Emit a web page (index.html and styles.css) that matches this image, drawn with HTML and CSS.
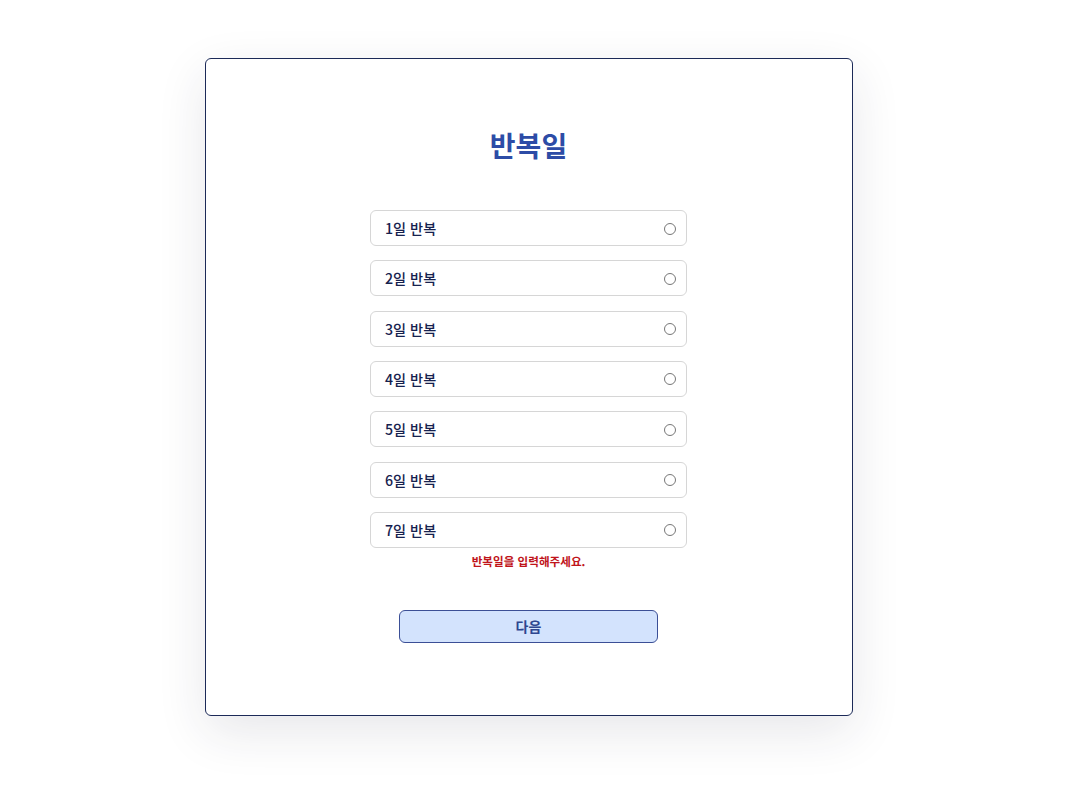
FILE: index.html
```html
<!DOCTYPE html>
<html lang="ko">
<head>
<meta charset="utf-8">
<link rel="stylesheet" href="styles.css">
</head>
<body>
<div class="page">
  <div class="card">
    <h1 class="title">반복일</h1>
    <ul class="options">
      <li class="option"><span>1일 반복</span><span class="radio"></span></li>
      <li class="option"><span>2일 반복</span><span class="radio"></span></li>
      <li class="option"><span>3일 반복</span><span class="radio"></span></li>
      <li class="option"><span>4일 반복</span><span class="radio"></span></li>
      <li class="option"><span>5일 반복</span><span class="radio"></span></li>
      <li class="option"><span>6일 반복</span><span class="radio"></span></li>
      <li class="option"><span>7일 반복</span><span class="radio"></span></li>
    </ul>
    <p class="error">반복일을 입력해주세요.</p>
    <button class="next">다음</button>
  </div>
</div>
</body>
</html>
```
FILE: styles.css
```css
* { box-sizing: border-box; }
html, body { margin: 0; padding: 0; background: #fff; }
body { font-family: "Noto Sans CJK KR", "Noto Sans", sans-serif; }
.page {
  padding: 58px 0 70px 205px;
}
.card {
  width: 648px;
  height: 658px;
  border: 1px solid #1c2a58;
  border-radius: 6px;
  background: #fff;
  box-shadow: 0 16px 50px rgba(40, 40, 60, 0.11);
  display: flex;
  flex-direction: column;
  align-items: center;
  padding: 66px 1px 0 0;
}
.title {
  margin: 0;
  font-size: 28px;
  line-height: 40px;
  font-weight: 700;
  color: #2d4ca6;
}
.options {
  list-style: none;
  margin: 45px 0 0;
  padding: 0;
  display: flex;
  flex-direction: column;
  gap: 14.33px;
  width: 317px;
}
.option {
  height: 36px;
  border: 1px solid #d6d6d6;
  border-radius: 6px;
  display: flex;
  align-items: center;
  justify-content: space-between;
  padding: 0 10px 0 14px;
  font-size: 14.2px;
  font-weight: 500;
  color: #16214e;
}
.radio {
  width: 12px;
  height: 12px;
  margin-top: 1px;
  border: 1px solid #777;
  border-radius: 50%;
}
.error {
  margin: 4px 0 0;
  font-size: 11.6px;
  line-height: 18px;
  font-weight: 700;
  color: #c0141a;
}
.next {
  margin-top: 40px;
  width: 259px;
  height: 33px;
  border: 1px solid #3b4f96;
  border-radius: 6px;
  background: #d3e3fd;
  font-family: inherit;
  font-size: 14px;
  font-weight: 700;
  color: #2e4690;
}
```
